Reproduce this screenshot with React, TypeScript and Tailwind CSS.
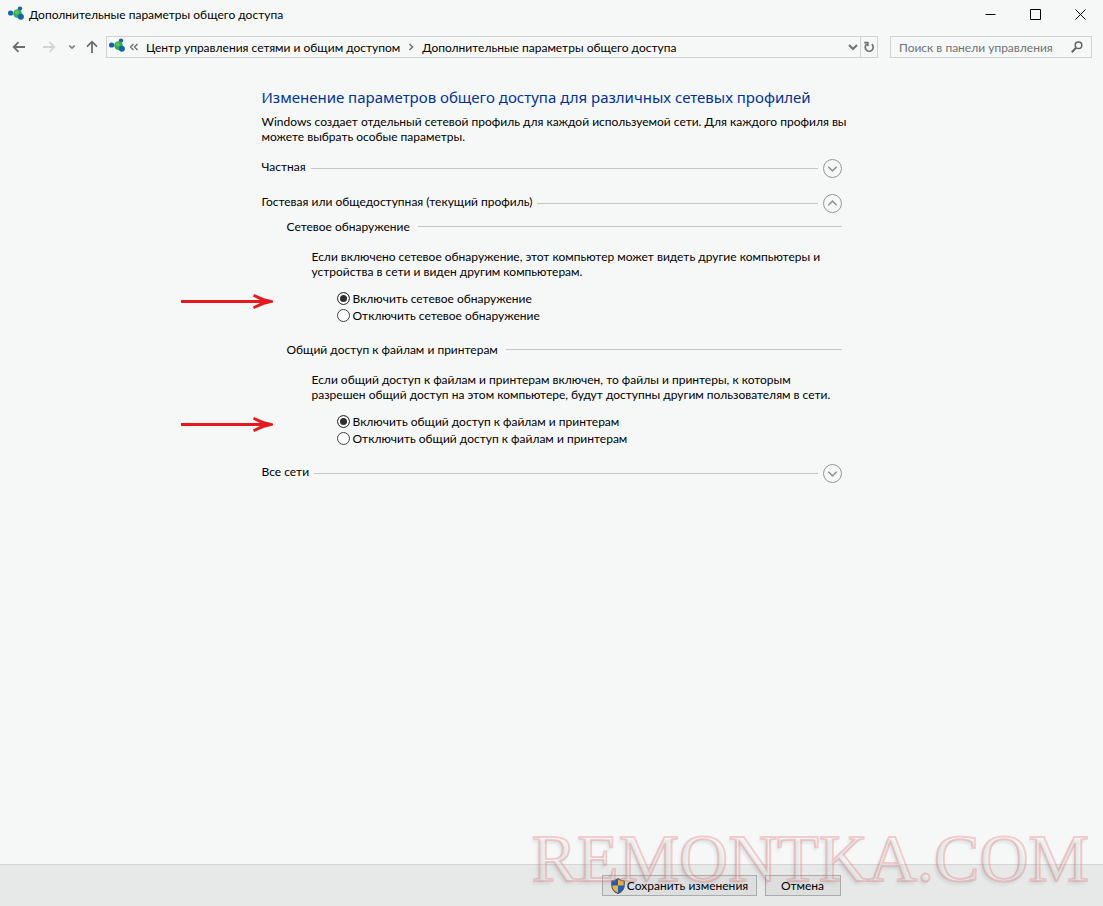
import React, { useState } from 'react';

interface ProfileHeaderProps {
  title: string;
  open: boolean;
  onToggle: () => void;
}

interface SettingProps {
  name: string;
  title: string;
  description: string;
  options: string[];
}

const NetworkIcon: React.FC = () => (
  <svg className="w-4 h-[18px] shrink-0" viewBox="0 0 16 18" aria-hidden="true">
    <circle cx="2.600" cy="7" r="2.600" fill="#1560b0" />
    <circle cx="12" cy="2.600" r="2.200" fill="#1560b0" />
    <circle cx="9.500" cy="7.600" r="4.300" fill="#2fae4a" />
    <circle cx="8.800" cy="6.400" r="2" fill="#52c763" />
    <circle cx="12.900" cy="10.700" r="3" fill="#1560b0" />
  </svg>
);

const ShieldIcon: React.FC = () => (
  <svg className="w-4 h-4 shrink-0" viewBox="0 0 16 16" aria-hidden="true">
    <path d="M8 .8C6.200 2.200 4 2.800 1.800 2.800V7.500C1.800 11.300 4.500 14 8 15.500z" fill="#f5b335" />
    <path d="M8 .8C9.800 2.200 12 2.800 14.200 2.800V7.500C14.200 11.300 11.500 14 8 15.500z" fill="#1560c0" />
    <path d="M8 .8C6.200 2.200 4 2.800 1.800 2.800V7.500H8z" fill="#1560c0" />
    <path d="M8 .8C9.800 2.200 12 2.800 14.200 2.800V7.500H8z" fill="#f5b335" />
    <path d="M8 .8C6.200 2.200 4 2.800 1.800 2.800V7.500C1.800 11.300 4.500 14 8 15.500C11.500 14 14.200 11.300 14.200 7.500V2.800C12 2.800 9.800 2.200 8 .8z" fill="none" stroke="#4d5561" strokeWidth="1.1" />
  </svg>
);

const Arrow: React.FC = () => (
  <svg className="absolute top-1 -left-[156px] w-[92px] h-4" viewBox="0 0 92 16" fill="#e5191e" aria-hidden="true">
    <path d="M0 6H84V9H0z" />
    <path d="M73 0L83 4.200L92 6.500V8.500L83 10.800L73 15L72 12.600L82 7.500L72 2.400z" />
  </svg>
);

const TitleBar: React.FC = () => (
  <header className="flex items-center h-[29px] pl-2">
    <NetworkIcon />
    <h1 className="ml-[5px] flex-1 text-black">Дополнительные параметры общего доступа</h1>
    <div className="flex">
      <button aria-label="Свернуть" className="w-[45px] h-[29px] flex items-center justify-center">
        <svg className="w-[11px] h-[11px]" viewBox="0 0 11 11" stroke="#000"><path d="M.5 5.500h10" /></svg>
      </button>
      <button aria-label="Развернуть" className="w-[45px] h-[29px] flex items-center justify-center">
        <svg className="w-[11px] h-[11px]" viewBox="0 0 11 11" stroke="#000" fill="none"><path d="M.5 .5h10v10H.5z" /></svg>
      </button>
      <button aria-label="Закрыть" className="w-[45px] h-[29px] flex items-center justify-center">
        <svg className="w-[11px] h-[11px]" viewBox="0 0 11 11" stroke="#000"><path d="M.5 .5l10 10M10.500 .5l-10 10" /></svg>
      </button>
    </div>
  </header>
);

const AddressBar: React.FC = () => (
  <nav className="flex items-center pt-[7px] pl-3 pr-[11px]">
    <button aria-label="Назад" className="w-[14px] h-5 flex items-center">
      <svg className="w-[14px] h-3" viewBox="0 0 14 12" fill="none" stroke="#6b6e6f" strokeWidth="1.8"><path d="M13 6H2M6.500 1.200L1.700 6l4.800 4.800" /></svg>
    </button>
    <button aria-label="Вперёд" className="ml-4 w-[14px] h-5 flex items-center">
      <svg className="w-[14px] h-3" viewBox="0 0 14 12" fill="none" stroke="#d2d4d4" strokeWidth="1.8"><path d="M1 6h11M7.500 1.200L12.300 6l-4.800 4.800" /></svg>
    </button>
    <button aria-label="Последние расположения" className="ml-3 w-2 h-5 flex items-center">
      <svg className="w-2 h-2" viewBox="0 0 8 8" fill="none" stroke="#7a7d7e" strokeWidth="1.6"><path d="M1.200 2.500L4 5.200l2.800-2.700" /></svg>
    </button>
    <button aria-label="Вверх" className="ml-[10px] w-3 h-5 flex items-center">
      <svg className="w-3 h-[14px]" viewBox="0 0 12 14" fill="none" stroke="#6b6e6f" strokeWidth="1.8"><path d="M6 13V2M1 6.700L6 1.700l5 5" /></svg>
    </button>
    <div className="ml-2 flex-1 flex items-center h-[22px] border border-[#cfd2d2] pl-[2px]">
      <NetworkIcon />
      <svg className="ml-1 w-[10px] h-2" viewBox="0 0 10 8" fill="none" stroke="#606364" strokeWidth="1.200"><path d="M4.500 1L1.500 4l3 3M8.500 1L5.500 4l3 3" /></svg>
      <a href="#network" className="ml-[7px] text-black">Центр управления сетями и общим доступом</a>
      <svg className="mx-[7px] w-2 h-2" viewBox="0 0 8 8" fill="none" stroke="#707374" strokeWidth="1.6"><path d="M2.500 1L5.500 4l-3 3" /></svg>
      <a href="#sharing" className="text-black">Дополнительные параметры общего доступа</a>
      <button aria-label="Предыдущие расположения" className="ml-auto w-[14px] h-5 flex items-center justify-center">
        <svg className="w-[10px] h-2" viewBox="0 0 10 8" fill="none" stroke="#707374" strokeWidth="2"><path d="M1 2l4 4 4-4" /></svg>
      </button>
      <button aria-label="Обновить" className="w-[17px] h-5 border-l border-[#cfd2d2] flex items-center justify-center">
        <svg className="w-3 h-3" viewBox="0 0 12 12" fill="none" stroke="#707374" strokeWidth="1.700"><path d="M8.800 3.200A4 4 0 1 1 3.600 3.200M1.200 1.700H4.800V5.300" /></svg>
      </button>
    </div>
    <div className="ml-3 w-[202px] h-[22px] border border-[#cfd2d2] flex items-center pl-2 pr-2">
      <input aria-label="Поиск" type="text" placeholder="Поиск в панели управления" className="min-w-0 flex-1 bg-transparent outline-none placeholder:text-[#707374]" />
      <svg className="w-3 h-3 shrink-0" viewBox="0 0 12 12" fill="none" stroke="#606364"><circle cx="7.500" cy="4.300" r="3.300" strokeWidth="1.500" /><path d="M5 6.900L.8 11.200" strokeWidth="2" /></svg>
    </div>
  </nav>
);

const ProfileHeader: React.FC<ProfileHeaderProps> = ({ title, open, onToggle }) => (
  <button onClick={onToggle} aria-expanded={open} className="flex w-full h-5 items-start text-left">
    <span>{title}</span>
    <span className="flex-1 h-px bg-[#c3c6c6] mt-[9px] ml-[5px] mr-[5px]" />
    <svg className="w-[19px] h-[19px]" viewBox="0 0 19 19" fill="none" stroke="#929596">
      <circle cx="9.500" cy="9.500" r="9" />
      <path d={open ? 'M5.300 11.300L9.500 7.200l4.200 4.100' : 'M5.300 7.700l4.200 4.100 4.200-4.100'} strokeWidth="1.600" />
    </svg>
  </button>
);

const Setting: React.FC<SettingProps> = ({ name, title, description, options }) => {
  const [selected, setSelected] = useState(0);

  return (
    <section className="pl-[25px] pb-[2px]">
      <div className="flex items-center">
        <h3>{title}</h3>
        <span className="flex-1 h-px bg-[#c3c6c6] ml-2" />
      </div>
      <p className="mt-[15px] pl-[25px]">{description}</p>
      <div role="radiogroup" aria-label={title} className="relative mt-[11px] ml-[50px]">
        <Arrow />
        {options.map((option, i) => (
          <label key={option} className="flex items-center h-[17px] w-fit">
            <input
              type="radio"
              name={name}
              checked={selected === i}
              onChange={() => setSelected(i)}
              className="appearance-none w-[13px] h-[13px] shrink-0 rounded-full border border-[#404040] bg-white checked:bg-[#303030] checked:shadow-[inset_0_0_0_2px_white]"
            />
            <span className="ml-[3px]">{option}</span>
          </label>
        ))}
      </div>
    </section>
  );
};

export default function App() {
  const [opened, setOpened] = useState('guest');
  const toggle = (id: string) => setOpened(opened === id ? '' : id);

  return (
    <div className="relative min-h-screen flex flex-col overflow-hidden bg-[#f6f8f8] text-black text-[12px] leading-[15px] font-['Lato','Noto_Sans',sans-serif]">
      <TitleBar />
      <AddressBar />
      <main className="flex-1 w-full max-w-[580px] mx-auto pt-[27px]">
        <h2 className="text-[15px] leading-6 text-[#003399] font-['Noto_Sans',sans-serif]">Изменение параметров общего доступа для различных сетевых профилей</h2>
        <p className="mt-[5px] -mr-3">
          Windows создает отдельный сетевой профиль для каждой используемой сети. Для каждого профиля вы можете выбрать особые параметры.
        </p>
        <div className="mt-[15px] flex flex-col gap-[15px]">
          <ProfileHeader title="Частная" open={opened === 'private'} onToggle={() => toggle('private')} />
          <div>
            <ProfileHeader title="Гостевая или общедоступная (текущий профиль)" open={opened === 'guest'} onToggle={() => toggle('guest')} />
            {opened === 'guest' && (
              <div className="mt-[5px] flex flex-col gap-4">
                <Setting
                  name="discovery"
                  title="Сетевое обнаружение"
                  description="Если включено сетевое обнаружение, этот компьютер может видеть другие компьютеры и устройства в сети и виден другим компьютерам."
                  options={['Включить сетевое обнаружение', 'Отключить сетевое обнаружение']}
                />
                <Setting
                  name="sharing"
                  title="Общий доступ к файлам и принтерам"
                  description="Если общий доступ к файлам и принтерам включен, то файлы и принтеры, к которым разрешен общий доступ на этом компьютере, будут доступны другим пользователям в сети."
                  options={['Включить общий доступ к файлам и принтерам', 'Отключить общий доступ к файлам и принтерам']}
                />
              </div>
            )}
          </div>
          <ProfileHeader title="Все сети" open={opened === 'all'} onToggle={() => toggle('all')} />
        </div>
      </main>
      <footer className="h-[42px] border-t border-[#d5d7d7] bg-[#e7e9e9]">
        <div className="max-w-[580px] mx-auto flex justify-end gap-2 pt-[10px] pr-px">
          <button className="h-[21px] w-[155px] border border-[#a9acac] bg-[#dddfdf] flex items-center justify-center">
            <ShieldIcon />
            <span className="ml-px">Сохранить изменения</span>
          </button>
          <button className="h-[21px] w-[76px] border border-[#a9acac] bg-[#dddfdf]">Отмена</button>
        </div>
      </footer>
      <div className="absolute right-[14px] bottom-2 pointer-events-none whitespace-nowrap font-['Liberation_Serif',serif] text-[68px] leading-[80px] text-white/20 [-webkit-text-stroke:2px_rgba(225,90,95,0.28)] [text-shadow:-2px_3px_3px_rgba(90,100,100,0.15)]">
        REMONTKA.COM
      </div>
    </div>
  );
}
